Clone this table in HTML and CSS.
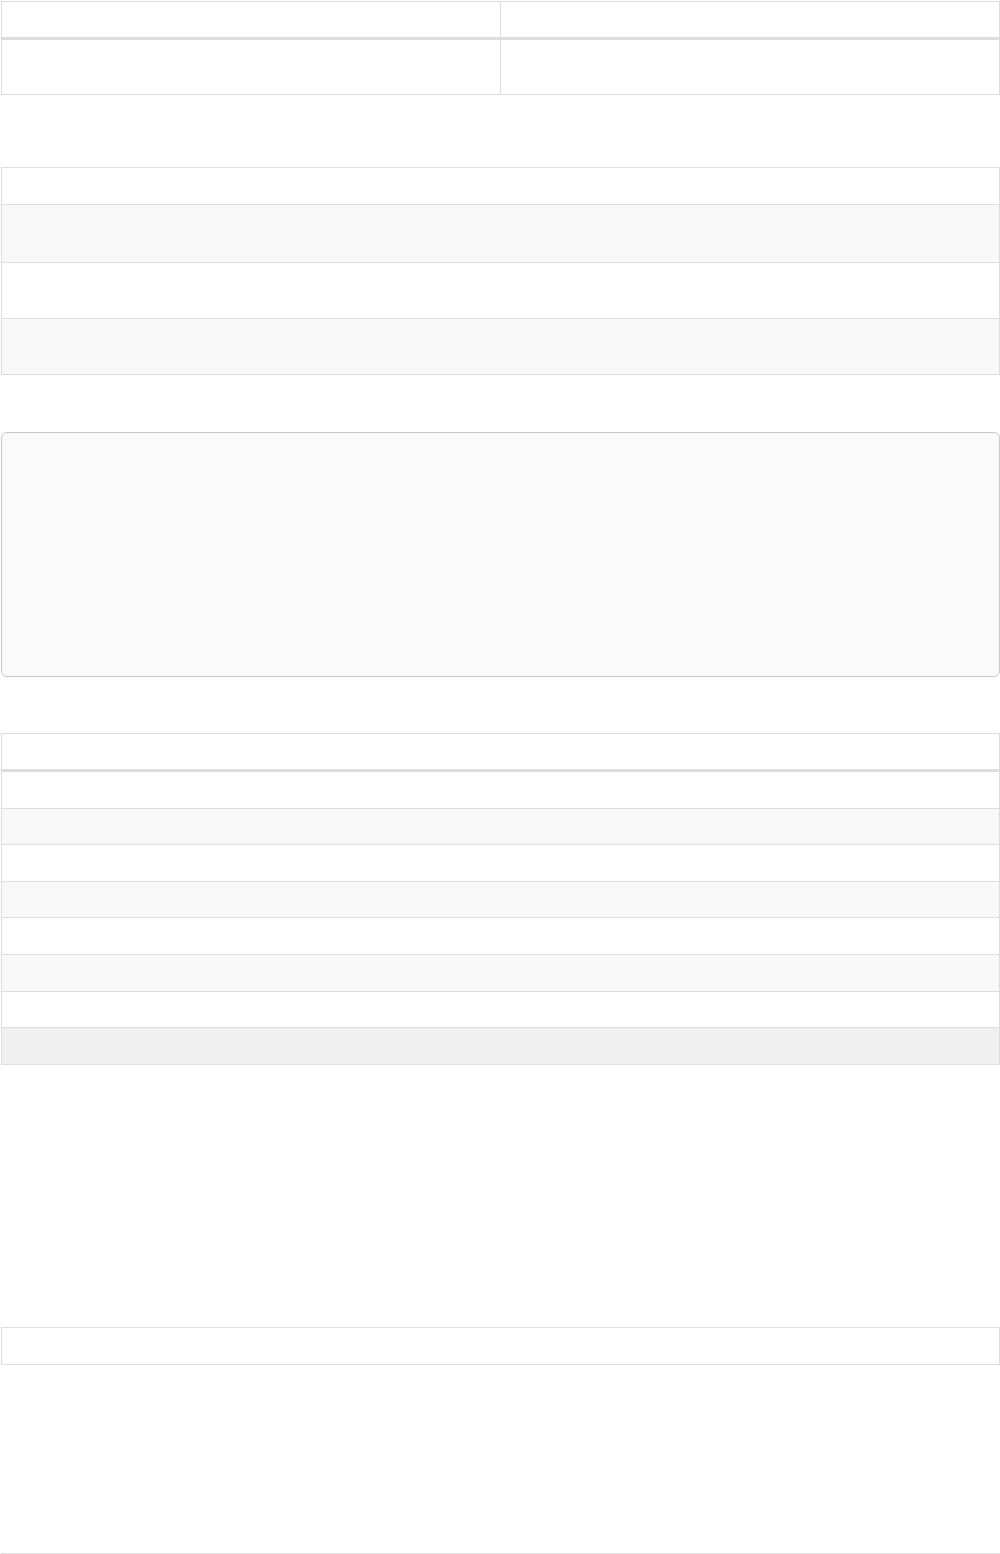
FILE: index.html
```html
<!DOCTYPE html>
<html>
<head>
  <link rel="stylesheet" href="styles.css">
</head>
<body>
  <div class="page">
    <!-- two column summary -->
    <table class="grid split">
      <tr class="head">
        <th class="half"></th>
        <th></th>
      </tr>
      <tr class="tall">
        <td></td>
        <td></td>
      </tr>
    </table>

    <!-- striped list -->
    <table class="grid list">
      <tr class="head thin">
        <th></th>
      </tr>
      <tr class="r58"><td></td></tr>
      <tr class="r56"><td></td></tr>
      <tr class="r56"><td></td></tr>
    </table>

    <div class="well"></div>

    <!-- detail table -->
    <table class="grid detail">
      <tr class="head">
        <th></th>
      </tr>
      <tr><td></td></tr>
      <tr><td></td></tr>
      <tr><td></td></tr>
      <tr><td></td></tr>
      <tr><td></td></tr>
      <tr><td></td></tr>
      <tr><td></td></tr>
      <tr class="total"><td></td></tr>
    </table>

    <table class="grid single">
      <tr><td></td></tr>
    </table>

    <div class="footer-line"></div>
  </div>
</body>
</html>
```

FILE: styles.css
```css
body {
  margin: 1px 0 0 1px;
  font-family: "Liberation Sans", Arial, sans-serif;
  font-size: 14px;
  color: #333;
  background-color: #fff;
}
.page {
  width: 999px;
}
.grid {
  width: 100%;
  table-layout: fixed;
  border-spacing: 0;
  border: 1px solid #ddd;
  border-bottom: none;
}
th, td {
  box-sizing: border-box;
  padding: 0;
  border-bottom: 1px solid #ddd;
  height: 37px;
}
.head th {
  height: 38px;
  border-bottom: 3px solid #ddd;
}
.head.thin th {
  height: 37px;
  border-bottom-width: 1px;
}
.split th.half {
  width: 498px;
}
.split th + th, .split td + td {
  border-left: 1px solid #ddd;
}
.split .tall td {
  height: 55px;
}
.split {
  margin-bottom: 72px;
}
/* list stripes start on the first row, detail stripes on the second */
.list tr:nth-child(even) td,
.detail tr:nth-child(odd):not(.head) td {
  background-color: #f8f8f8;
}
.r58 td {
  height: 58px;
}
.r56 td {
  height: 56px;
}
.list {
  margin-bottom: 57px;
}
.well {
  box-sizing: border-box;
  height: 245px;
  background-color: #fafafa;
  border: 1px solid #c8c8c8;
  border-radius: 6px;
  margin-bottom: 56px;
}
.detail tr:not(.head) td {
  height: 36.6px;
}
.detail tr.total:not(.head) td {
  background-color: #f0f0f0;
}
.detail {
  margin-bottom: 262px;
}
.single {
  margin-bottom: 188px;
}
.footer-line {
  border-top: 1px solid #ddd;
  height: 0;
}
```
